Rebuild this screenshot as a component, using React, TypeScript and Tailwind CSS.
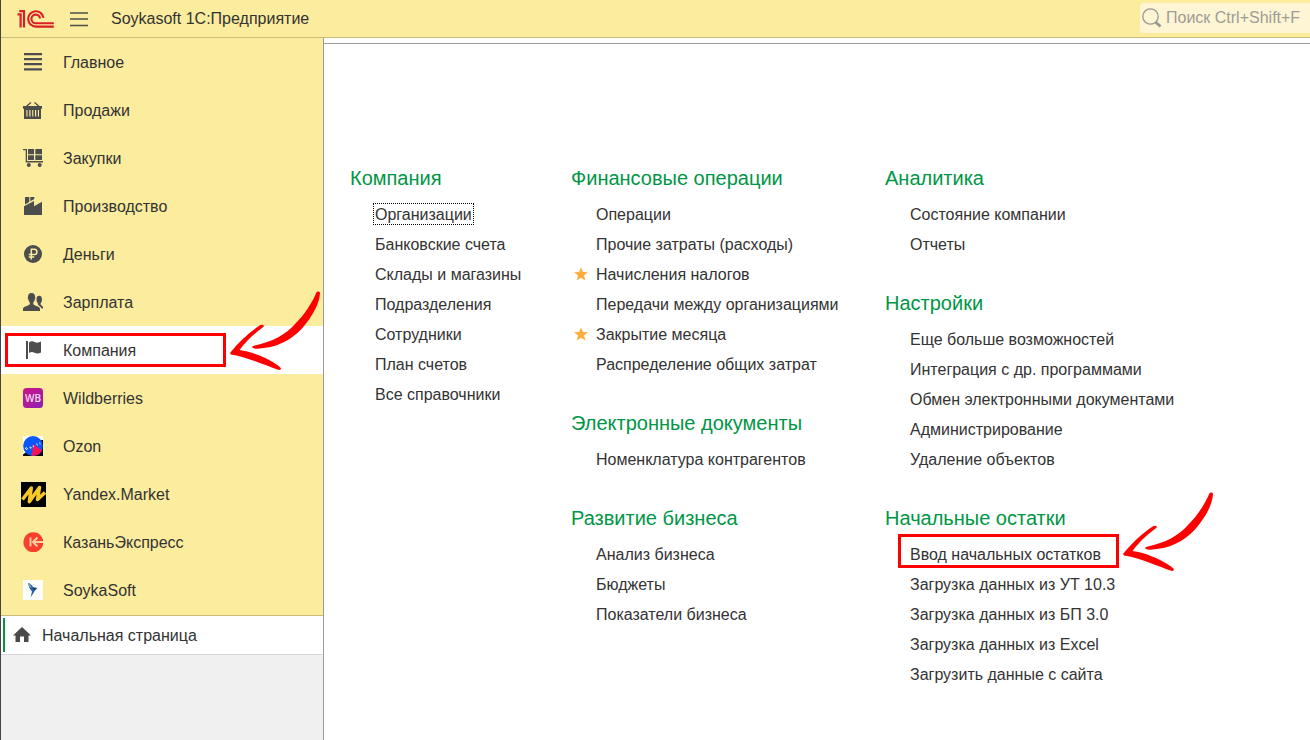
import type { ReactNode } from "react";

type NavItem = { label: string; icon: ReactNode; active?: boolean };
type MenuLink = { label: string; starred?: boolean; focused?: boolean; marked?: boolean };
type Section = { title: string; links: MenuLink[] };

const iconClass = "mx-0.5 size-5 shrink-0 text-[#4d4d4d]";

const LinesIcon = () => (
  <svg viewBox="0 0 20 20" className={iconClass} fill="currentColor" aria-hidden="true">
    <path d="M1 1h18v2.200H1zM1 6h18v2.200H1zM1 11h18v2.200H1zM1 16.300h18v2.200H1z" />
  </svg>
);

const BasketIcon = () => (
  <svg viewBox="0 0 20 20" className={iconClass} aria-hidden="true">
    <path d="M3.500 6.300 8 2.500M11.500 2.500 16 6.300" stroke="currentColor" strokeWidth="1.300" fill="none" />
    <path
      fill="currentColor"
      fillRule="evenodd"
      d="M0 6h19v2.700h-1V19H1V8.700H0zM3.400 10v6.500h1.100V10zM6.300 10v6.500h1.200V10zM9.200 10v6.500h1.100V10zM12 10v6.500h1.200V10zM14.900 10v6.500H16V10z"
    />
  </svg>
);

const CartIcon = () => (
  <svg viewBox="0 0 20 20" className={iconClass} fill="currentColor" aria-hidden="true">
    <path d="M0 1h4v12h16v1.500H2.700V2.200H0z" />
    <path d="M5 1h6v5.300H5zM12.300 1H19v5.300h-6.700zM5 7.300h6V12H5zM12.300 7.300H19V12h-6.700z" />
    <circle cx="5.800" cy="17" r="2" />
    <circle cx="16.700" cy="17" r="2" />
  </svg>
);

const FactoryIcon = () => (
  <svg viewBox="0 0 20 20" className={iconClass} fill="currentColor" aria-hidden="true">
    <path d="M2 1h4.300v5L2 8.600zM7.300 1h4v2l-4 2.300z" />
    <path d="M1 10.300 11 5v5.300l8-4.500V19H1z" />
  </svg>
);

const RubleIcon = () => (
  <svg viewBox="0 0 20 20" className={iconClass} aria-hidden="true">
    <circle cx="10" cy="10" r="9" fill="currentColor" />
    <path d="M8.300 15.500V5.300h3a2.600 2.600 0 0 1 0 5.200H5.800M5.800 13h5.500" fill="none" stroke="#fbec9e" strokeWidth="1.500" />
  </svg>
);

const PeopleIcon = () => (
  <svg viewBox="0 0 20 20" className={iconClass} fill="currentColor" aria-hidden="true">
    <path d="M8.500 1C6 1 4.800 2.700 5 5.200c-.5.300-.3 1.500.3 2 .2 1.700.8 2.400 1.500 3.100v2C5.500 14 .8 14.300 0 16.500V19h17v-2.500c-.8-2.200-5.400-2.500-6.700-4.200v-2c.7-.7 1.300-1.400 1.500-3.100.6-.5.8-1.700.3-2C12.300 2.700 11 1 8.500 1z" />
    <path d="M16.300 3.700c-2.400 0-3 1.800-2.700 4-.4.500 0 1.400.4 1.700.2 1.200.5 1.600 1 2v1.200c.8 1.200 2.600 2.300 3.600 4h1.400v-1.400c-.6-1.500-1.800-1.800-2.500-2.900v-.9c.5-.5.8-.8 1-2 .4-.3.700-1.200.4-1.700.2-2.200-.4-4-2.600-4z" />
  </svg>
);

const FlagIcon = () => (
  <svg viewBox="0 0 20 20" className={iconClass} fill="currentColor" aria-hidden="true">
    <path d="M3 1h2v18H3zM6 2.500c2-1.800 4-1.500 5.500-.6 2.300 1.200 4 .9 6.500-.3v11c-2.500 1.300-4.500 1.300-6.500.2-2-1-3.500-1-5.500.2z" />
  </svg>
);

const WildberriesIcon = () => (
  <svg viewBox="0 0 20 20" className={iconClass} aria-hidden="true">
    <defs>
      <linearGradient id="wb" x1="0" y1="0" x2="1" y2="1">
        <stop offset="0" stopColor="#cf1482" />
        <stop offset="0.550" stopColor="#ae1a9f" />
        <stop offset="1" stopColor="#8322b5" />
      </linearGradient>
    </defs>
    <rect width="20" height="20" rx="3.500" fill="url(#wb)" />
    <text x="10" y="13.700" textAnchor="middle" fontSize="10" fontWeight="600" fontFamily="Open Sans, sans-serif" fill="#f8dcf3">
      WB
    </text>
  </svg>
);

const OzonIcon = () => (
  <svg viewBox="0 0 20 20" className={iconClass} aria-hidden="true">
    <rect width="20" height="20" fill="#fff" />
    <path d="M18.500 4H20v16H0v-1.500z" fill="#0a0a14" />
    <circle cx="10" cy="10" r="9.900" fill="#0b57fb" />
    <path d="M10.500 8 19 14.500C17 18 14 20 8.500 19.900z" fill="#f91155" />
    <path d="M2 13 3.300 11.500 4.500 12.800 3 13.800M6.500 11.200l1.800.3-.8 1.200M10.300 9.300v2M13.500 7.500l1 2M16.500 6.500l.8 1.800" fill="none" stroke="#e4edff" strokeWidth="1" />
  </svg>
);

const YandexIcon = () => (
  <svg viewBox="0 0 25 25" className="size-[25px] shrink-0" aria-hidden="true">
    <rect width="25" height="25" fill="#000" />
    <path
      d="M1.500 17.500 10.300 6 8.300 19.700 18.500 5.500 16.500 17.500 24 10.500"
      fill="none"
      stroke="#f6c928"
      strokeWidth="3.500"
      strokeLinejoin="round"
    />
  </svg>
);

const KazanIcon = () => (
  <svg viewBox="0 0 20 20" className={iconClass} aria-hidden="true">
    <path d="M20 7.500A10 10 0 1 0 20 13z" fill="#f9402c" />
    <path d="M7.500 5.500v9M20 10H10M14.500 5.500 10 10l4.500 4.500" fill="none" stroke="#fbcfa4" strokeWidth="1.900" />
  </svg>
);

const SoykaIcon = () => (
  <svg viewBox="0 0 20 20" className={iconClass} aria-hidden="true">
    <rect width="20" height="20" fill="#fcfdfd" />
    <path d="M5 3c1.500.2 3.500 1.500 5 4L14.500 8 12 10.500 10.500 13 7.500 17.500 9 11.500C6.500 9 5.500 6 5 3z" fill="#2b6198" />
    <path d="M5 3c1 .8 2.600 2 3.400 4L7 7.500z" fill="#8fb3c9" />
    <path d="m10 8 3 .6-2 1.600z" fill="#12325c" />
  </svg>
);

const HomeIcon = () => (
  <svg viewBox="0 0 18 16" className="h-4 w-[18px] shrink-0" fill="#4a4a4a" aria-hidden="true">
    <path d="M9 0 18 8.500h-2.500V15H11V9.500H7V15H2.500V8.500H0z" />
  </svg>
);

const StarIcon = () => (
  <svg viewBox="0 0 14 14" className="size-3.5" fill="#ffae3b" aria-hidden="true">
    <path d="M7 .3 8.900 5l5.100.2-4 3.300 1.300 5L7 10.700l-4.300 2.800 1.300-5-4-3.300L5.100 5z" />
  </svg>
);

const Logo = () => (
  <svg viewBox="0 0 38 20" className="h-5 w-[38px] shrink-0" fill="none" stroke="#dc1f26" aria-label="1С" role="img">
    <path d="M.5 5.400H3.600V18.500" strokeWidth="2.200" />
    <path d="M2.300 2.200H7V18.500" strokeWidth="2.200" />
    <path d="M26.500 8.800A7.700 7.700 0 1 0 19 17.600h17.800" strokeWidth="2.100" />
    <path d="M23 9.500A4.300 4.300 0 1 0 19 14.200h17.800" strokeWidth="2.100" />
  </svg>
);

const Callout = () => (
  <span className="pointer-events-none absolute top-0 left-0 h-[34px] w-[221px] border-3 border-[#fe0000]">
    <svg viewBox="0 0 90 80" className="absolute -top-[45px] left-[222px] h-20 w-[90px]" fill="#fe0000" aria-hidden="true">
      <path d="M86.500 1.200C87.500.2 89.800.3 90 2 89.500 13 82 26 72 37.500 61 49.500 46 57 27 57.700c-5 .2-6.500-2-3-3C43 50.500 55 44 65 33 74 24 81.500 13 86.500 1.200z" />
      <path d="M0 62C8 52 19 41.500 30 34.300c2.500-1.300 4.500-.3 3.500 1.500C27 41 17 48.500 9.500 59 21 60.500 36 66 48 74.500c3.500 2.700 4 4 1 4.500C35 74.500 19 66.500 1 63.500z" />
    </svg>
  </span>
);

const navItems: NavItem[] = [
  { label: "Главное", icon: <LinesIcon /> },
  { label: "Продажи", icon: <BasketIcon /> },
  { label: "Закупки", icon: <CartIcon /> },
  { label: "Производство", icon: <FactoryIcon /> },
  { label: "Деньги", icon: <RubleIcon /> },
  { label: "Зарплата", icon: <PeopleIcon /> },
  { label: "Компания", icon: <FlagIcon />, active: true },
  { label: "Wildberries", icon: <WildberriesIcon /> },
  { label: "Ozon", icon: <OzonIcon /> },
  { label: "Yandex.Market", icon: <YandexIcon /> },
  { label: "КазаньЭкспресс", icon: <KazanIcon /> },
  { label: "SoykaSoft", icon: <SoykaIcon /> },
];

const columns: Section[][] = [
  [
    {
      title: "Компания",
      links: [
        { label: "Организации", focused: true },
        { label: "Банковские счета" },
        { label: "Склады и магазины" },
        { label: "Подразделения" },
        { label: "Сотрудники" },
        { label: "План счетов" },
        { label: "Все справочники" },
      ],
    },
  ],
  [
    {
      title: "Финансовые операции",
      links: [
        { label: "Операции" },
        { label: "Прочие затраты (расходы)" },
        { label: "Начисления налогов", starred: true },
        { label: "Передачи между организациями" },
        { label: "Закрытие месяца", starred: true },
        { label: "Распределение общих затрат" },
      ],
    },
    { title: "Электронные документы", links: [{ label: "Номенклатура контрагентов" }] },
    {
      title: "Развитие бизнеса",
      links: [{ label: "Анализ бизнеса" }, { label: "Бюджеты" }, { label: "Показатели бизнеса" }],
    },
  ],
  [
    { title: "Аналитика", links: [{ label: "Состояние компании" }, { label: "Отчеты" }] },
    {
      title: "Настройки",
      links: [
        { label: "Еще больше возможностей" },
        { label: "Интеграция с др. программами" },
        { label: "Обмен электронными документами" },
        { label: "Администрирование" },
        { label: "Удаление объектов" },
      ],
    },
    {
      title: "Начальные остатки",
      links: [
        { label: "Ввод начальных остатков", marked: true },
        { label: "Загрузка данных из УТ 10.3" },
        { label: "Загрузка данных из БП 3.0" },
        { label: "Загрузка данных из Excel" },
        { label: "Загрузить данные с сайта" },
      ],
    },
  ],
];

function Header() {
  return (
    <header className="flex h-[38px] items-center border-b border-[#c9bd7b] bg-[#fbec9e] pl-4">
      <Logo />
      <button type="button" aria-label="Меню" className="ml-3.5">
        <svg viewBox="0 0 20 16" className="h-4 w-5" stroke="#4d4d4d" strokeWidth="1.500" aria-hidden="true">
          <path d="M1 2h18M1 8h18M1 14.500h18" />
        </svg>
      </button>
      <h1 className="ml-[22px]">Soykasoft 1С:Предприятие</h1>
      <label className="mb-px ml-auto flex h-[30px] w-[170px] items-center rounded-l-sm bg-[#fdf5d4] pl-0.5">
        <svg viewBox="0 0 20 20" className="size-5 shrink-0" fill="none" stroke="#9a9894" aria-hidden="true">
          <circle cx="8.500" cy="8.500" r="7.700" strokeWidth="1.300" />
          <path d="m13.500 14 5 4.500" strokeWidth="3" />
        </svg>
        <input
          type="text"
          aria-label="Поиск"
          placeholder="Поиск Ctrl+Shift+F"
          className="ml-1 w-full min-w-0 bg-transparent outline-none placeholder:text-[#9f9c96]"
        />
      </label>
    </header>
  );
}

function Sidebar() {
  return (
    <aside className="w-[323px] shrink-0 border-r border-[#9b9b9b] bg-[#f0f0f0]">
      <nav>
        <ul className="border-b border-[#c9bd7b] bg-[#fbec9e] pb-px">
          {navItems.map((item) => (
            <li key={item.label} className="relative">
              <a
                href="#"
                aria-current={item.active ? "page" : undefined}
                className={`flex h-12 items-center pl-5 ${item.active ? "bg-white" : ""}`}
              >
                <span className="flex w-[42px] shrink-0 items-center">{item.icon}</span>
                <span className="pt-0.5">{item.label}</span>
              </a>
              {item.active && (
                <span className="absolute top-[7px] left-1">
                  <Callout />
                </span>
              )}
            </li>
          ))}
        </ul>
        <div className="border-b border-[#d8d8d8] bg-white py-0.5 pl-0.5">
          <a href="#" className="flex h-[34px] items-center border-l-2 border-[#0d9147] pl-2">
            <HomeIcon />
            <span className="ml-[11px] pt-0.5">Начальная страница</span>
          </a>
        </div>
      </nav>
    </aside>
  );
}

function MenuSection({ title, links }: Section) {
  return (
    <section>
      <h2 className="mb-[9px] text-xl leading-6 text-[#009646]">{title}</h2>
      <ul className="pl-[25px]">
        {links.map((link) => (
          <li key={link.label} className="relative flex h-[30px] items-center">
            {link.starred && (
              <span className="absolute -left-[22px]">
                <StarIcon />
              </span>
            )}
            <a
              href="#"
              className={`pt-0.5 leading-5 whitespace-nowrap ${
                link.focused ? "-mx-0.5 px-0.5 outline-1 -outline-offset-1 outline-black outline-dotted" : ""
              }`}
            >
              {link.label}
            </a>
            {link.marked && (
              <span className="absolute -top-[5px] -left-3">
                <Callout />
              </span>
            )}
          </li>
        ))}
      </ul>
    </section>
  );
}

export default function App() {
  return (
    <div className="flex min-h-screen flex-col border-l border-[#444444] bg-white font-['Liberation_Sans',Arial,sans-serif] text-base text-[#333333]">
      <Header />
      <div className="flex flex-1">
        <Sidebar />
        <main className="min-w-0 flex-1 pt-[5px]">
          <div className="grid grid-cols-[221px_314px_1fr] border-t border-[#9b9b9b] pt-[122px] pl-[26px]">
            {columns.map((sections) => (
              <div key={sections[0].title} className="flex flex-col gap-8">
                {sections.map((section) => (
                  <MenuSection key={section.title} {...section} />
                ))}
              </div>
            ))}
          </div>
        </main>
      </div>
    </div>
  );
}
